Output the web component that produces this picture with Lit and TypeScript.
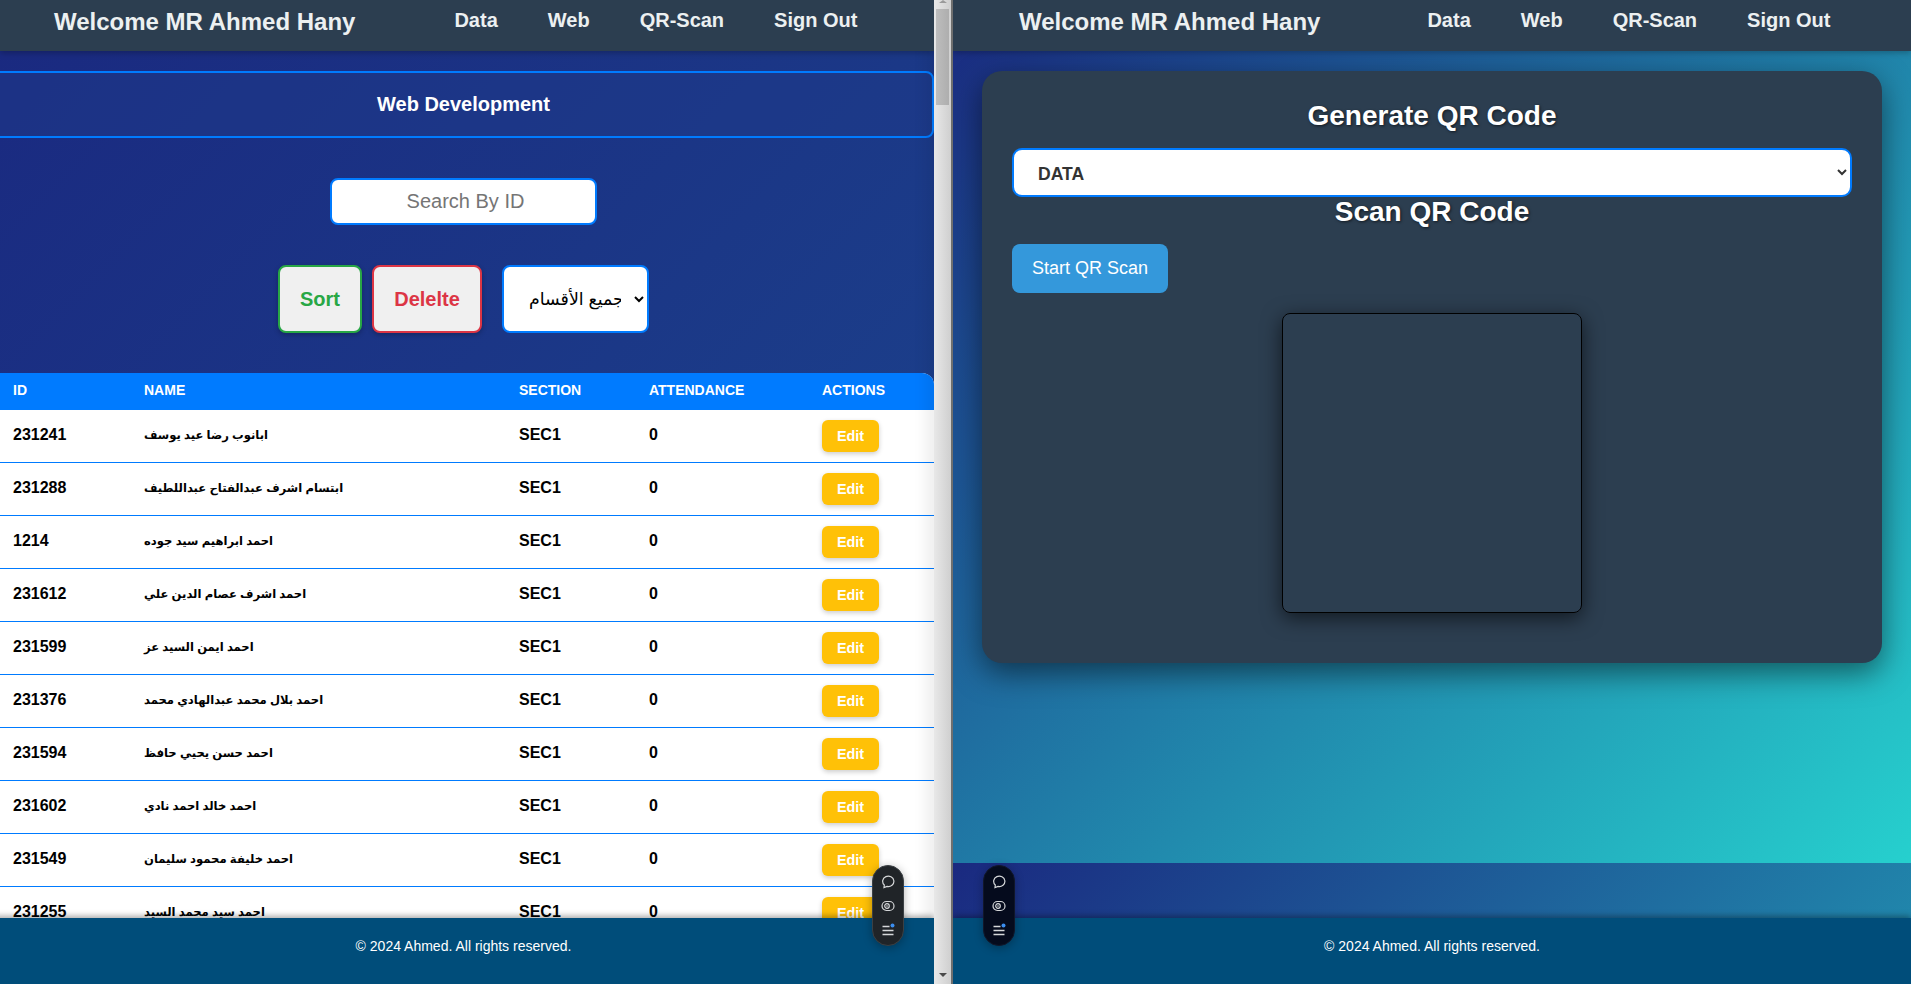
import { LitElement, html, css } from 'lit'
import { customElement, property } from 'lit/decorators.js'

const students = [
  ['231241', 'ابانوب رضا عيد يوسف'],
  ['231288', 'ابتسام اشرف عبدالفتاح عبداللطيف'],
  ['1214', 'احمد ابراهيم سيد جوده'],
  ['231612', 'احمد اشرف عصام الدين علي'],
  ['231599', 'احمد ايمن السيد عز'],
  ['231376', 'احمد بلال محمد عبدالهادي محمد'],
  ['231594', 'احمد حسن يحيي حافظ'],
  ['231602', 'احمد خالد احمد نادي'],
  ['231549', 'احمد خليفة محمود سليمان'],
  ['231255', 'احمد سيد محمد السيد'],
]

@customElement('tool-pill')
export class ToolPill extends LitElement {
  static styles = css`
    :host {
      position: absolute;
      bottom: 38px;
      width: 32px;
      height: 81px;
      box-sizing: border-box;
      border-radius: 16px;
      background: #202428;
      border: 1px solid #3b4044;
      box-shadow: 0 2px 10px rgba(0, 0, 0, 0.3);
      display: flex;
      flex-direction: column;
      align-items: center;
      gap: 10px;
      padding-top: 9px;
      z-index: 5;
    }
    :host([dark]) {
      background: #050b1d;
      border-color: #11172a;
    }
    svg {
      display: block;
      width: 14px;
      height: 14px;
      fill: none;
      stroke: #d6d8da;
      stroke-width: 1.2;
    }
  `

  @property({ type: Boolean, reflect: true }) dark = false

  render() {
    return html`
      <svg viewBox="0 0 14 14"><path d="M3 12.6 3.3 10A5.6 5.2 0 1 1 6 11.4Z" /></svg>
      <svg viewBox="0 0 14 14">
        <rect x="1" y="2.5" width="12" height="9" rx="4.5" />
        <circle cx="6" cy="7" r="2.3" />
        <circle cx="6" cy="7" r="0.8" fill="#d6d8da" stroke="none" />
      </svg>
      <svg viewBox="0 0 14 14">
        <path d="M1.5 3.5H8.5M1.5 7.5H12.5M1.5 11.5H12.5" stroke-width="1.6" />
        <circle cx="11.5" cy="2.5" r="2" fill="#3b8ef0" stroke="none" />
      </svg>
    `
  }
}

@customElement('top-bar')
export class TopBar extends LitElement {
  static styles = css`
    :host {
      display: flex;
      align-items: center;
      flex: none;
      height: 51px;
      padding-bottom: 8px;
      box-sizing: border-box;
      background: #2c3e50;
      color: #ecf0f1;
      box-shadow: 0 2px 6px rgba(0, 0, 0, 0.25);
      font-weight: 700;
      position: relative;
      z-index: 2;
    }
    .title {
      font-size: 24px;
      white-space: nowrap;
    }
    nav {
      display: flex;
      gap: 50px;
      font-size: 20px;
      margin-left: var(--nav-gap, 98px);
      padding-bottom: 2px;
    }
  `

  render() {
    return html`
      <span class="title">Welcome MR Ahmed Hany</span>
      <nav>
        <span>Data</span><span>Web</span><span>QR-Scan</span><span>Sign Out</span>
      </nav>
    `
  }
}

@customElement('page-footer')
export class PageFooter extends LitElement {
  static styles = css`
    :host {
      display: block;
      flex: none;
      height: 66px;
      box-sizing: border-box;
      padding-top: 19px;
      background: #004d7a;
      color: #fff;
      font-size: 14px;
      line-height: 18px;
      text-align: center;
      box-shadow: 0 -2px 6px rgba(0, 0, 0, 0.35);
      position: relative;
      z-index: 2;
    }
  `

  render() {
    return html`© 2024 Ahmed. All rights reserved.`
  }
}

@customElement('app-root')
export class AppRoot extends LitElement {
  static styles = css`
    :host {
      display: grid;
      grid-template-columns: 953px 958px;
      height: 984px;
      overflow: hidden;
      font-family: 'Liberation Sans', 'DejaVu Sans', Arial, sans-serif;
    }

    /* left window */
    .win-left {
      display: grid;
      grid-template-columns: 934px 17px 2px;
      height: 984px;
      position: relative;
      overflow: hidden;
    }
    .page {
      display: flex;
      flex-direction: column;
      height: 984px;
      min-width: 0;
      overflow: hidden;
      background: linear-gradient(135deg, #1a2980, #26d0ce) 0 0 / 100% 9800px repeat-y;
    }
    .page top-bar {
      padding-left: 54px;
      --nav-gap: 99px;
    }
    .page page-footer {
      margin-left: -7px;
    }
    .scroll-area {
      flex: 1;
      min-height: 0;
      overflow: hidden;
      margin-left: -7px;
      padding-top: 20px;
      display: flex;
      flex-direction: column;
      align-items: center;
    }
    .banner {
      flex: none;
      width: 100%;
      height: 67px;
      box-sizing: border-box;
      border: 2px solid #007bff;
      border-radius: 8px;
      background: rgba(30, 58, 138, 0.5);
      color: #fff;
      font-size: 20px;
      font-weight: 700;
      display: flex;
      align-items: center;
      justify-content: center;
    }
    .search {
      flex: none;
      width: 267px;
      height: 47px;
      box-sizing: border-box;
      margin-top: 40px;
      border: 2px solid #007bff;
      border-radius: 8px;
      background: #fff;
      font: 20px 'Liberation Sans', sans-serif;
      text-align: center;
      outline: none;
      padding: 0 10px 0 14px;
    }
    .search::placeholder {
      color: #757575;
    }
    .tools {
      flex: none;
      display: flex;
      align-items: center;
      gap: 10px;
      margin-top: 40px;
    }
    .btn {
      height: 68px;
      box-sizing: border-box;
      border-radius: 8px;
      border: 2px solid;
      background: #f0f0f0;
      font: 700 20px 'Liberation Sans', sans-serif;
      box-shadow: 0 2px 5px rgba(0, 0, 0, 0.25);
      padding: 0;
    }
    .sort {
      width: 84px;
      color: #28a745;
      border-color: #28a745;
    }
    .delete {
      width: 110px;
      color: #dc3545;
      border-color: #dc3545;
    }
    .section-select {
      width: 147px;
      height: 68px;
      box-sizing: border-box;
      margin-left: 10px;
      border: 2px solid #007bff;
      border-radius: 8px;
      background: #fff;
      color: #000;
      font: 17.4px 'Liberation Sans', 'DejaVu Sans', sans-serif;
      padding: 0 10px 0 21px;
      outline: none;
    }
    table {
      flex: none;
      width: 941px;
      margin-top: 40px;
      table-layout: fixed;
      border-collapse: separate;
      border-spacing: 0;
      border-radius: 0 12px 0 0;
      overflow: hidden;
      background: #fff;
      color: #000;
    }
    th {
      height: 37px;
      background: #007bff;
      color: #fff;
      font-size: 14px;
      text-align: left;
      text-transform: uppercase;
      padding: 0 0 3px 20px;
      box-sizing: border-box;
    }
    td {
      height: 53px;
      box-sizing: border-box;
      padding: 0 0 2px 20px;
      border-bottom: 1px solid #007bff;
      font-size: 16px;
      font-weight: 700;
    }
    td.name {
      font-size: 11.6px;
    }
    .edit {
      display: block;
      width: 57px;
      height: 32px;
      margin-top: 2px;
      border: 0;
      border-radius: 6px;
      background: #ffc107;
      color: #fff;
      font: 700 14.4px 'Liberation Sans', sans-serif;
      box-shadow: 0 2px 5px rgba(0, 0, 0, 0.2);
      padding: 0;
    }

    /* fake scrollbar */
    .scrollbar {
      display: flex;
      flex-direction: column;
      align-items: center;
      background: linear-gradient(90deg, #e8e8e8, #cfcfcf);
      box-shadow: -8px 0 14px rgba(0, 0, 0, 0.07);
      position: relative;
      z-index: 1;
    }
    .thumb {
      width: 13px;
      height: 96px;
      margin-top: 6px;
      background: linear-gradient(90deg, #bdbdbd, #aeaeae);
    }
    .arrow-up,
    .arrow-down {
      width: 0;
      height: 0;
      border-left: 4px solid transparent;
      border-right: 4px solid transparent;
    }
    .arrow-up {
      border-bottom: 3px solid #9a9a9a;
    }
    .arrow-down {
      margin-top: auto;
      margin-bottom: 7px;
      border-top: 4px solid #4a4a4a;
    }
    .divider {
      background: #6f6f6f;
      position: relative;
      z-index: 1;
    }

    /* right window */
    .win-right {
      display: flex;
      flex-direction: column;
      height: 984px;
      position: relative;
      overflow: hidden;
      background: linear-gradient(135deg, #1a2980, #26d0ce) 0 0 / 100% 863px repeat-y;
    }
    .win-right top-bar {
      padding-left: 66px;
      --nav-gap: 107px;
    }
    .qr-main {
      flex: 1;
      min-height: 0;
      padding: 20px 29px 0 29px;
    }
    .card {
      height: 592px;
      box-sizing: border-box;
      padding: 29px 30px 0;
      border-radius: 20px;
      background: #2c3e50;
      box-shadow: 0 10px 30px rgba(0, 0, 0, 0.5);
      display: flex;
      flex-direction: column;
    }
    h2 {
      margin: 0;
      color: #fff;
      font-size: 28px;
      line-height: 32px;
      text-align: center;
      text-shadow: 1px 1px 3px rgba(0, 0, 0, 0.6);
    }
    .data-select {
      height: 49px;
      flex: none;
      box-sizing: border-box;
      margin: 16px 0 -1px;
      border: 2px solid #007bff;
      border-radius: 10px;
      background: #fff;
      color: #333;
      font: 700 17.6px 'Liberation Sans', sans-serif;
      padding: 2px 20px 0;
      outline: none;
    }
    .scan-btn {
      align-self: flex-start;
      flex: none;
      width: 156px;
      height: 49px;
      margin-top: 16px;
      border: 0;
      border-radius: 8px;
      background: #3498db;
      color: #fff;
      font: 18px 'Liberation Sans', sans-serif;
      padding: 0;
    }
    .reader {
      align-self: center;
      flex: none;
      width: 300px;
      height: 300px;
      box-sizing: border-box;
      margin-top: 20px;
      border: 1px solid #000;
      border-radius: 8px;
      box-shadow: 0 5px 20px rgba(0, 0, 0, 0.6);
    }
  `

  render() {
    return html`
      <div class="win-left">
        <div class="page">
          <top-bar></top-bar>
          <div class="scroll-area">
            <div class="banner">Web Development</div>
            <input class="search" placeholder="Search By ID" />
            <div class="tools">
              <button class="btn sort">Sort</button>
              <button class="btn delete">Delelte</button>
              <select class="section-select"><option>جميع الأقسام</option></select>
            </div>
            <table>
              <colgroup>
                <col style="width:131px" /><col style="width:375px" /><col style="width:130px" /><col
                  style="width:173px"
                /><col style="width:132px" />
              </colgroup>
              <thead>
                <tr><th>ID</th><th>Name</th><th>Section</th><th>Attendance</th><th>Actions</th></tr>
              </thead>
              <tbody>
                ${students.map(
                  ([id, name]) => html`
                    <tr>
                      <td>${id}</td>
                      <td class="name">${name}</td>
                      <td>SEC1</td>
                      <td>0</td>
                      <td><button class="edit">Edit</button></td>
                    </tr>
                  `
                )}
              </tbody>
            </table>
          </div>
          <page-footer></page-footer>
        </div>
        <div class="scrollbar">
          <div class="arrow-up"></div>
          <div class="thumb"></div>
          <div class="arrow-down"></div>
        </div>
        <div class="divider"></div>
        <tool-pill style="left:872px"></tool-pill>
      </div>
      <div class="win-right">
        <top-bar></top-bar>
        <div class="qr-main">
          <div class="card">
            <h2>Generate QR Code</h2>
            <select class="data-select"><option>DATA</option></select>
            <h2>Scan QR Code</h2>
            <button class="scan-btn">Start QR Scan</button>
            <div class="reader"></div>
          </div>
        </div>
        <page-footer></page-footer>
        <tool-pill dark style="left:30px"></tool-pill>
      </div>
    `
  }
}
